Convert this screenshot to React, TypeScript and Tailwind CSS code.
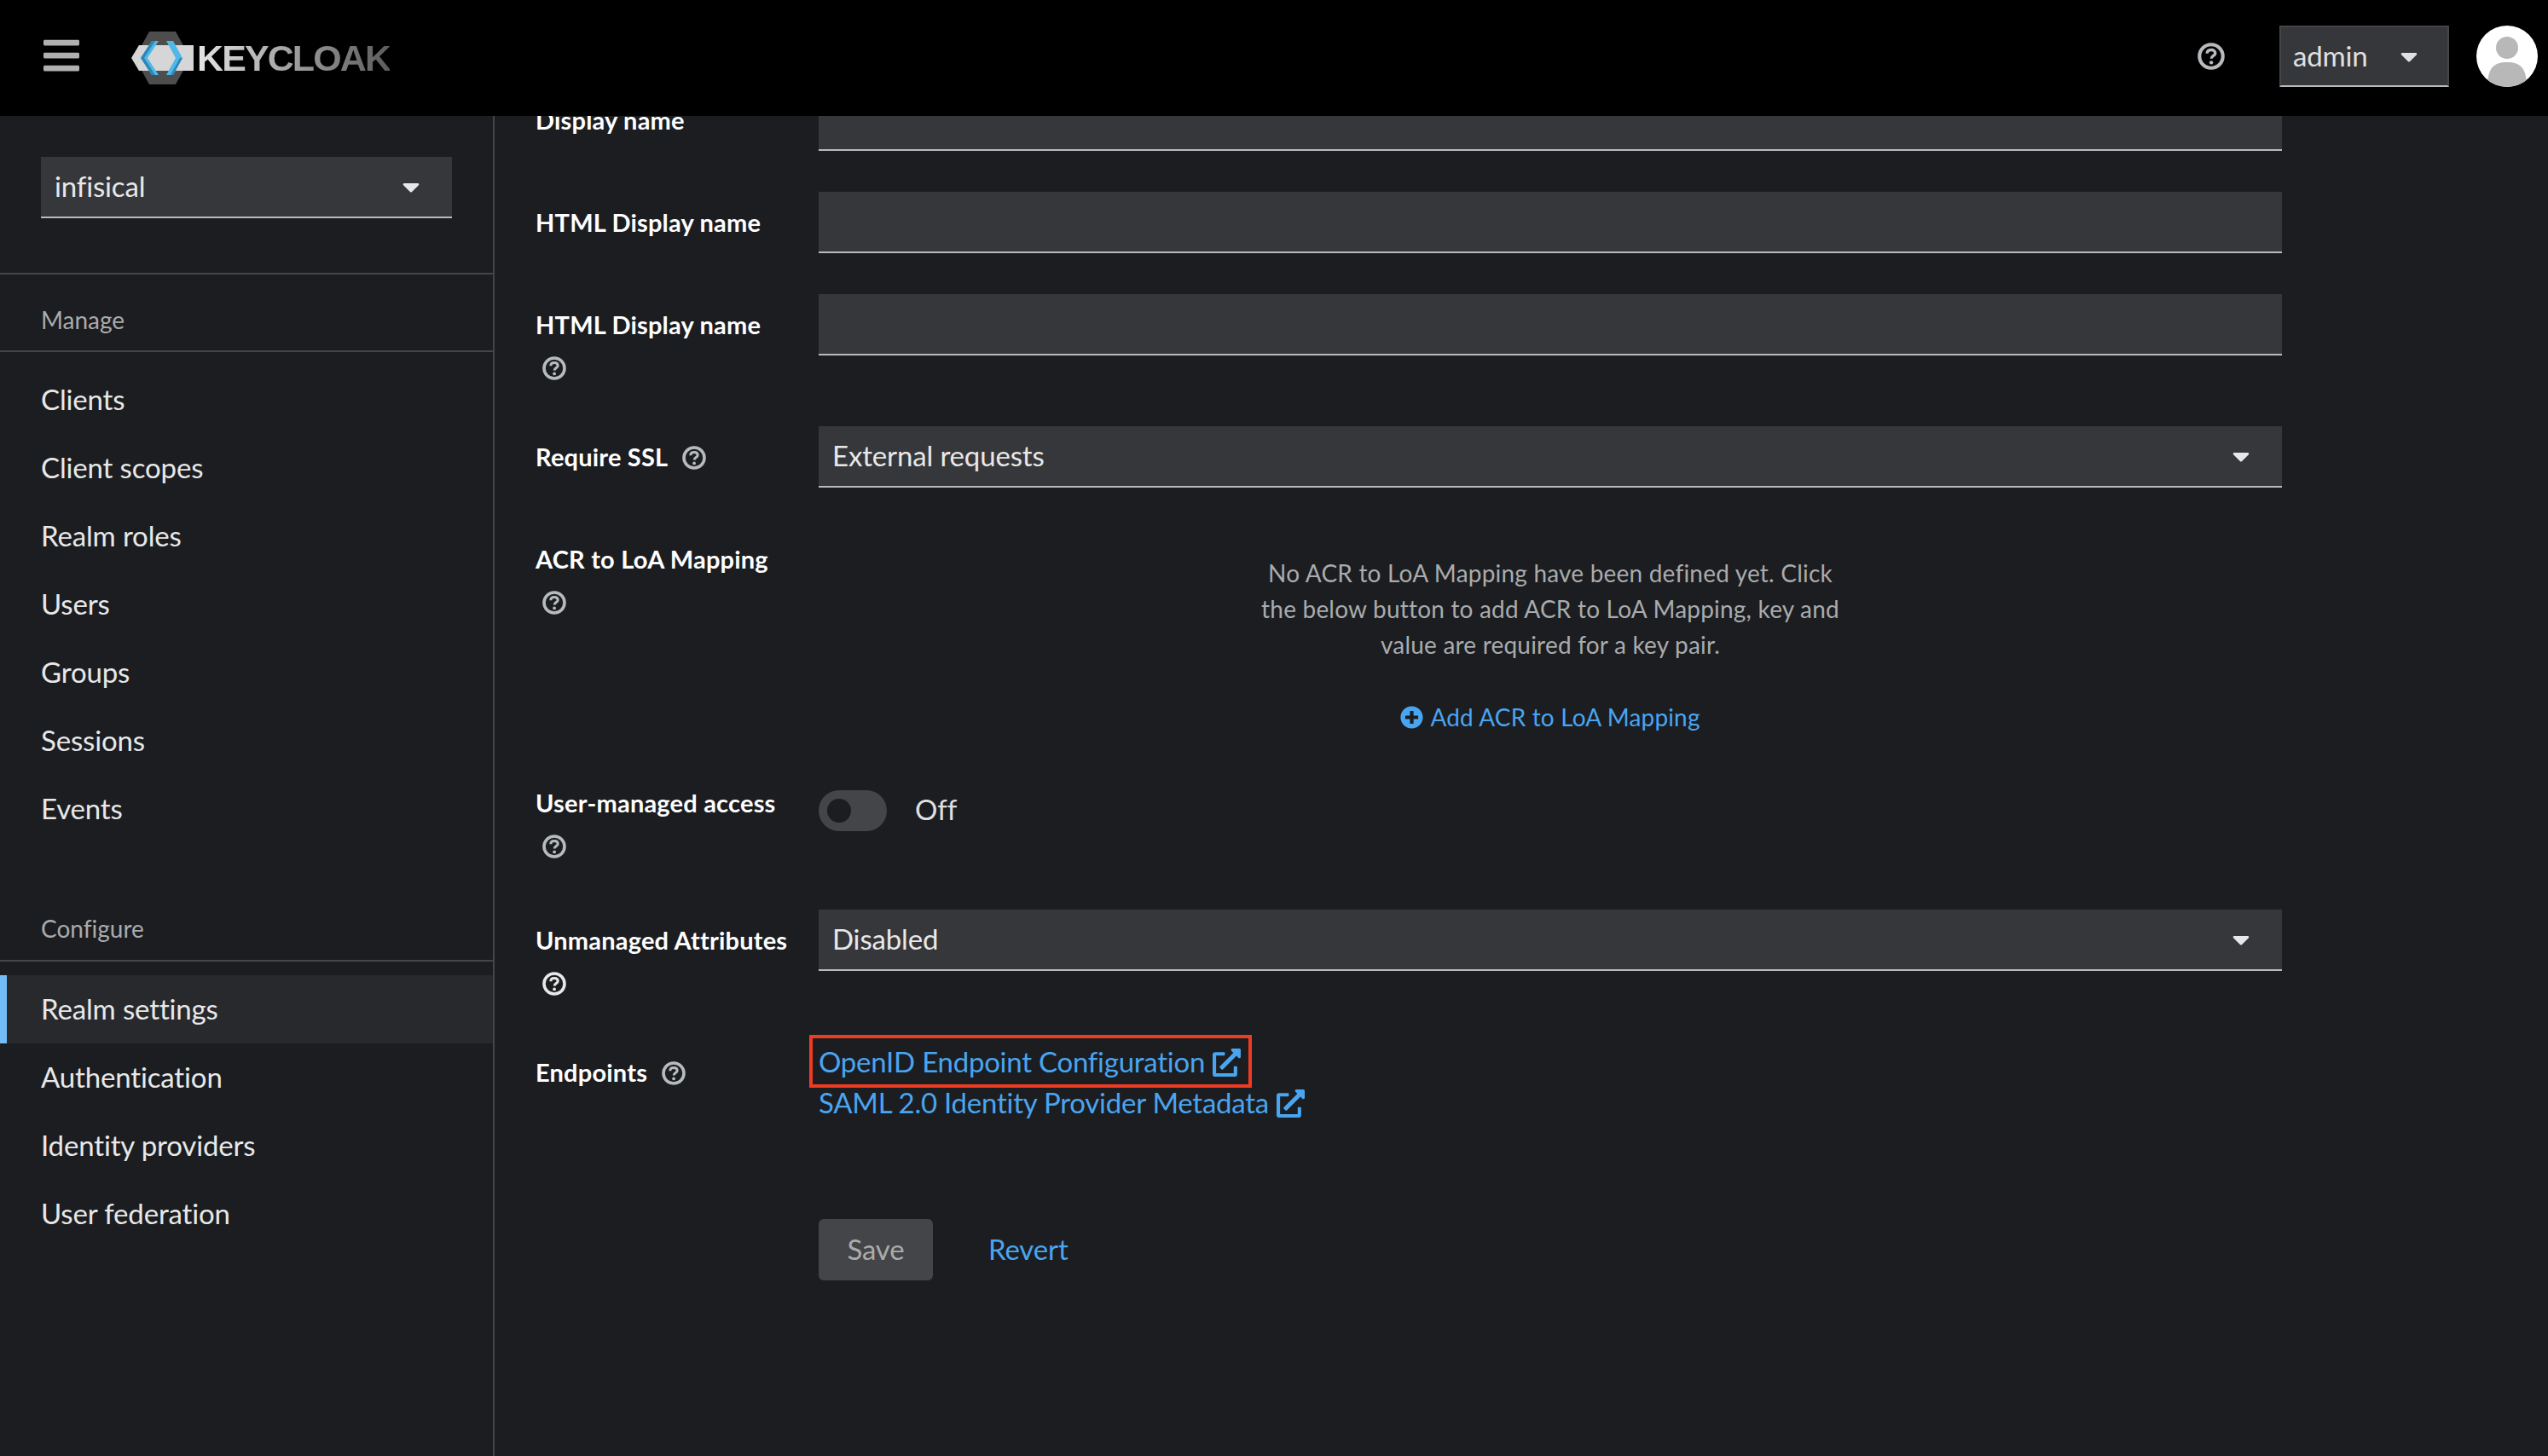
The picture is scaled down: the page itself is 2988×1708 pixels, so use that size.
import { FaBars, FaCaretDown, FaExternalLinkAlt, FaPlusCircle } from 'react-icons/fa'

const MANAGE = ['Clients', 'Client scopes', 'Realm roles', 'Users', 'Groups', 'Sessions', 'Events']
const CONFIGURE = ['Realm settings', 'Authentication', 'Identity providers', 'User federation']

function HelpIcon({ size = 28, color = '#b8bbbe' }: { size?: number; color?: string }) {
  return (
    <svg width={size} height={size} viewBox="0 0 28 28" fill="none" className="shrink-0">
      <circle cx="14" cy="14" r="12" stroke={color} strokeWidth="3.6" />
      <path d="M9.8 11.2 C9.8 8.6 11.7 7.4 14 7.4 C16.4 7.4 18.2 8.7 18.2 10.9 C18.2 13.4 14.2 13.7 14.2 16.4" stroke={color} strokeWidth="3" />
      <circle cx="14.1" cy="20.4" r="1.9" fill={color} />
    </svg>
  )
}

function Logo() {
  return (
    <div className="flex items-center">
      <svg width="77" height="63" viewBox="0 0 77 63">
        <polygon points="21,0 52,0 69,31 52,62 21,62 4,31" fill="#4d4d4d" />
        <polygon points="0,31 9,16 73,16 73,46 9,46" fill="#d6d6d6" />
        <polygon points="24,11 32,11 19,31 32,51 24,51 11,31" fill="#4fb8e8" />
        <polygon points="24,11 28,11 15,31 28,51 24,51 11,31" fill="#2e86b5" />
        <polygon points="41,11 49,11 60,31 49,51 41,51 52,31" fill="#4fb8e8" />
        <polygon points="41,51 46,51 57,31 60,31 49,51" fill="#2e86b5" />
      </svg>
      <span className="font-['Liberation_Sans',sans-serif] text-[43px] leading-none font-bold tracking-[-1.9px] bg-gradient-to-r from-[#e6e6e6] to-[#5c5c5c] bg-clip-text text-transparent">
        KEYCLOAK
      </span>
    </div>
  )
}

function Avatar() {
  return (
    <svg width="72" height="72" viewBox="0 0 72 72">
      <defs>
        <clipPath id="avatar-clip">
          <circle cx="36" cy="36" r="36" />
        </clipPath>
      </defs>
      <g clipPath="url(#avatar-clip)">
        <rect width="72" height="72" fill="#ffffff" />
        <circle cx="36" cy="26" r="13" fill="#b8b8b8" />
        <path d="M13 72 C13 50 20 43 36 43 C52 43 59 50 59 72 Z" fill="#b8b8b8" />
      </g>
    </svg>
  )
}

function Header() {
  return (
    <header className="h-[136px] bg-black flex items-center pl-[48px] pr-[12px] shrink-0">
      <FaBars className="text-[48px] text-[#b0b0b0] mb-[7px]" />
      <div className="ml-[58px]">
        <Logo />
      </div>
      <div className="ml-auto flex items-center pb-[4px]">
        <HelpIcon size={32} />
        <div className="ml-[64px] w-[199px] h-[72px] bg-[#36373a] border-2 border-[#444548] border-b-[#b8bbbe] flex items-center pl-[14px] text-[33px] tracking-[-0.15px] text-[#e0e0e0]">
          admin
          <FaCaretDown className="text-[32px] text-[#e0e0e0] ml-[32px]" />
        </div>
        <div className="ml-[32px]">
          <Avatar />
        </div>
      </div>
    </header>
  )
}

function NavItem({ label, active = false }: { label: string; active?: boolean }) {
  return (
    <div
      className={
        active
          ? 'h-[80px] flex items-center pl-[40px] border-l-8 border-[#73bcf7] bg-[#27292d] text-[33px] tracking-[-0.15px] text-[#e8e8e8]'
          : 'h-[80px] flex items-center pl-[48px] text-[33px] tracking-[-0.15px] text-[#e8e8e8]'
      }
    >
      {label}
    </div>
  )
}

function Sidebar() {
  return (
    <aside className="w-[580px] shrink-0 border-r-2 border-[#444548] pt-[48px]">
      <div className="mx-[48px] h-[72px] bg-[#36373a] border-b-2 border-[#b8bbbe] flex items-center justify-between pl-[16px] pr-[32px] text-[33px] tracking-[-0.15px] text-[#e8e8e8]">
        infisical
        <FaCaretDown className="text-[32px]" />
      </div>
      <div className="mt-[64px] border-t-2 border-[#444548]" />
      <div className="pl-[48px] pt-[32px] pb-[15px] border-b-2 border-[#444548] text-[28px] leading-[42px] text-[#aaabac]">Manage</div>
      <nav className="mt-[16px]">
        {MANAGE.map((m) => (
          <NavItem key={m} label={m} />
        ))}
      </nav>
      <div className="mt-[79px] pl-[48px] pb-[16px] border-b-2 border-[#444548] text-[28px] leading-[42px] text-[#aaabac]">Configure</div>
      <nav className="mt-[16px]">
        {CONFIGURE.map((m, i) => (
          <NavItem key={m} label={m} active={i === 0} />
        ))}
      </nav>
    </aside>
  )
}

function Label({ text, help, bright = false }: { text: string; help?: 'inline' | 'below'; bright?: boolean }) {
  return (
    <div className="w-[332px] shrink-0 pt-[15px] text-[29px] leading-[42px] font-bold tracking-[0.2px] text-white">
      <div className="flex items-center">
        {text}
        {help === 'inline' && (
          <span className="ml-[17px] mt-[2px]">
            <HelpIcon />
          </span>
        )}
      </div>
      {help === 'below' && (
        <div className="h-[50px] pt-[16px] pl-[8px]">
          <HelpIcon color={bright ? '#e8e8e8' : '#b8bbbe'} />
        </div>
      )}
    </div>
  )
}

function Input() {
  return <div className="w-[1716px] h-[72px] bg-[#36373a] border-b-2 border-[#b8bbbe]" />
}

function Select({ value }: { value: string }) {
  return (
    <div className="w-[1716px] h-[72px] bg-[#36373a] border-b-2 border-[#b8bbbe] flex items-center justify-between pl-[16px] pr-[32px] text-[33px] tracking-[-0.15px] text-[#e8e8e8]">
      {value}
      <FaCaretDown className="text-[32px]" />
    </div>
  )
}

function ExtLink({ text }: { text: string }) {
  return (
    <span className="flex items-center h-[48px] text-[33px] tracking-[-0.25px] text-[#4aa5f0]">
      {text}
      <FaExternalLinkAlt className="ml-[9px] text-[33px]" />
    </span>
  )
}

function RealmForm() {
  return (
    <main className="flex-1 overflow-hidden pl-[48px]">
      <div className="-mt-[31px] flex flex-col gap-[48px]">
        <div className="flex">
          <Label text="Display name" />
          <Input />
        </div>
        <div className="flex">
          <Label text="HTML Display name" />
          <Input />
        </div>
        <div className="flex">
          <Label text="HTML Display name" help="below" />
          <Input />
        </div>
        <div className="flex">
          <Label text="Require SSL" help="inline" />
          <Select value="External requests" />
        </div>
        <div className="flex h-[238px]">
          <Label text="ACR to LoA Mapping" help="below" />
          <div className="w-[1716px] pt-[31px] flex flex-col items-center">
            <p className="w-[695px] text-center text-[28px] leading-[42px] tracking-[0.2px] text-[#aaabac]">
              No ACR to LoA Mapping have been defined yet. Click the below button to add ACR to LoA Mapping, key and value are required for a key pair.
            </p>
            <div className="mt-[45px] flex items-center text-[28px] leading-[39px] tracking-[0.15px] text-[#4aa5f0]">
              <FaPlusCircle className="mr-[8px] text-[27px]" />
              Add ACR to LoA Mapping
            </div>
          </div>
        </div>
        <div className="flex h-[113px]">
          <Label text="User-managed access" help="below" />
          <div className="flex items-start pt-[21px]">
            <div className="w-[80px] h-[48px] rounded-full bg-[#444548] flex items-center pl-[10px]">
              <div className="w-[28px] h-[28px] rounded-full bg-[#1b1d21]" />
            </div>
            <span className="ml-[33px] text-[33px] leading-[44px] text-[#e0e0e0]">Off</span>
          </div>
        </div>
        <div className="flex">
          <Label text="Unmanaged Attributes" help="below" bright />
          <Select value="Disabled" />
        </div>
        <div className="flex">
          <Label text="Endpoints" help="inline" />
          <div>
            <div className="relative">
              <ExtLink text="OpenID Endpoint Configuration" />
              <div className="absolute -left-[11px] -top-[8px] w-[519px] h-[62px] border-4 border-[#ee3b22]" />
            </div>
            <ExtLink text="SAML 2.0 Identity Provider Metadata" />
          </div>
        </div>
        <div className="flex pl-[332px] mt-[64px]">
          <div className="w-[134px] h-[72px] rounded-[6px] bg-[#444548] flex items-center justify-center text-[33px] tracking-[-0.15px] text-[#aaabac]">Save</div>
          <div className="ml-[65px] h-[72px] flex items-center text-[33px] tracking-[-0.15px] text-[#4aa5f0]">Revert</div>
        </div>
      </div>
    </main>
  )
}

export default function App() {
  return (
    <div className="w-[2988px] h-[1708px] overflow-hidden flex flex-col bg-[#1b1d21] font-['Lato',sans-serif] [font-variant-ligatures:none]">
      <Header />
      <div className="flex flex-1 min-h-0">
        <Sidebar />
        <RealmForm />
      </div>
    </div>
  )
}
